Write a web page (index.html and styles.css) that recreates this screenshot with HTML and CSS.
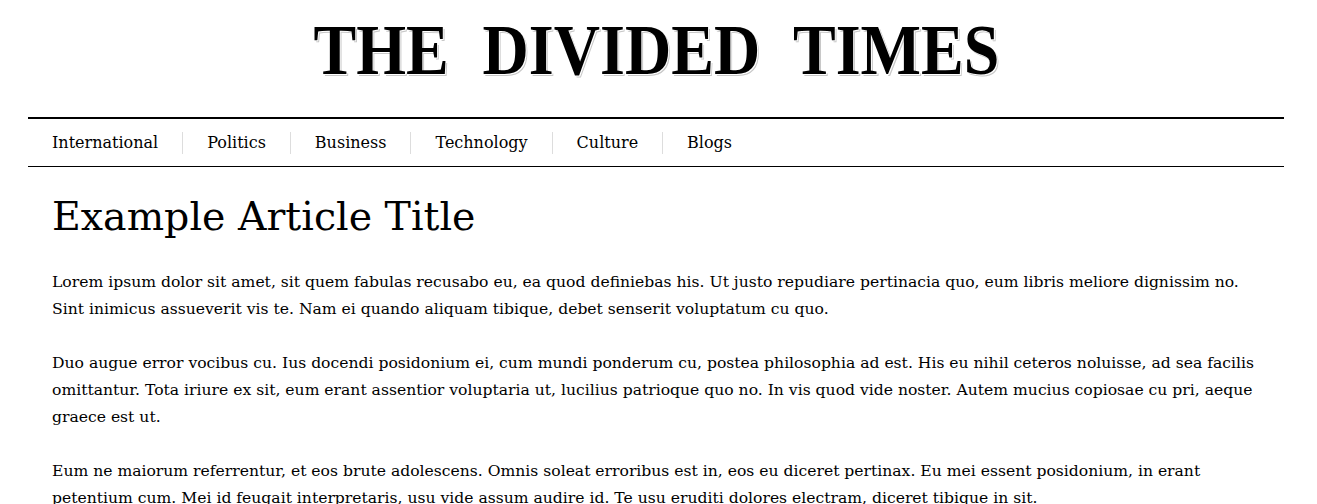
FILE: index.html
```html
<!DOCTYPE html>
<html lang="en">
<head>
<meta charset="utf-8">
<title>The Divided Times</title>
<link rel="stylesheet" href="styles.css">
</head>
<body>
<div class="page">
  <header class="masthead">
    <h1 class="brand"><span class="brand-text">THE DIVIDED TIMES</span></h1>
  </header>
  <nav class="nav">
    <a class="nav-item" href="#">International</a>
    <a class="nav-item" href="#">Politics</a>
    <a class="nav-item" href="#">Business</a>
    <a class="nav-item" href="#">Technology</a>
    <a class="nav-item" href="#">Culture</a>
    <a class="nav-item" href="#">Blogs</a>
  </nav>
  <article class="article">
    <h2 class="article-title">Example Article Title</h2>
    <p>Lorem ipsum dolor sit amet, sit quem fabulas recusabo eu, ea quod definiebas his. Ut justo repudiare pertinacia quo, eum libris meliore dignissim no. Sint inimicus assueverit vis te. Nam ei quando aliquam tibique, debet senserit voluptatum cu quo.</p>
    <p>Duo augue error vocibus cu. Ius docendi posidonium ei, cum mundi ponderum cu, postea philosophia ad est. His eu nihil ceteros noluisse, ad sea facilis omittantur. Tota iriure ex sit, eum erant assentior voluptaria ut, lucilius patrioque quo no. In vis quod vide noster. Autem mucius copiosae cu pri, aeque graece est ut.</p>
    <p>Eum ne maiorum referrentur, et eos brute adolescens. Omnis soleat erroribus est in, eos eu diceret pertinax. Eu mei essent posidonium, in erant petentium cum. Mei id feugait interpretaris, usu vide assum audire id. Te usu eruditi dolores electram, diceret tibique in sit.</p>
  </article>
</div>
</body>
</html>
```

FILE: styles.css
```css
html, body {
  margin: 0;
  padding: 0;
  background: #fff;
}

body {
  color: #000;
  font-family: "DejaVu Serif", "Liberation Serif", serif;
}

.page {
  margin: 0 33px 0 28px;
}

.masthead {
  padding-top: 10px;
  text-align: center;
}

.brand {
  margin: 0;
  font-family: "Liberation Serif", "Times New Roman", serif;
  font-size: 72px;
  font-weight: bold;
  line-height: 80px;
  word-spacing: 20px;
  text-shadow: 1px 1px 0 #fff, 2px 2px 0 #c8c8c8;
}

.brand-text {
  display: inline-block;
  transform: scaleX(0.89);
}

.nav {
  margin-top: 27px;
  display: flex;
  border-top: 2px solid #000;
  border-bottom: 1px solid #000;
  padding: 13px 0 12px;
}

.nav-item {
  color: #000;
  text-decoration: none;
  font-size: 16px;
  line-height: 22px;
  padding: 0 24px;
  border-left: 1px solid #ddd;
}

.nav-item:first-child {
  border-left: none;
}

.article {
  padding: 0 24px;
}

.article-title {
  margin: 22px 0 26px;
  font-size: 39.5px;
  font-weight: normal;
  line-height: 54px;
}

.article p {
  margin: 0 0 27px;
  font-size: 15.6px;
  line-height: 27px;
}
```
